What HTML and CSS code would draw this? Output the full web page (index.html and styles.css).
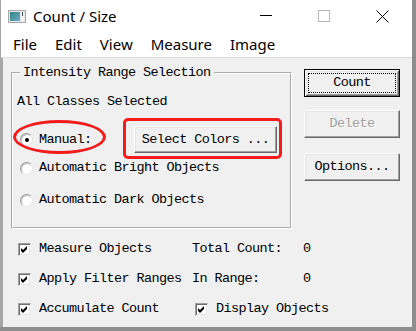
FILE: index.html
```html
<!DOCTYPE html>
<html>
<head>
<meta charset="utf-8">
<title>Count / Size</title>
<link rel="stylesheet" href="styles.css">
</head>
<body>
<div class="window">
  <div class="titlebar">
    <svg class="app-icon" width="18" height="13" viewBox="0 0 18 13">
      <defs>
        <linearGradient id="ig" x1="0" y1="0" x2="1" y2="1">
          <stop offset="0" stop-color="#2f7f86"/>
          <stop offset="0.5" stop-color="#4f9aa0"/>
          <stop offset="1" stop-color="#6fa6d8"/>
        </linearGradient>
      </defs>
      <rect x="0.5" y="0.5" width="17" height="12" fill="#e6e6e6" stroke="#a8a8a8"/>
      <rect x="2" y="2" width="10" height="9" fill="url(#ig)"/>
      <rect x="13" y="2" width="3" height="9" fill="#f4f4f4"/>
      <rect x="14" y="2" width="1" height="4" fill="#3a4a5a"/>
    </svg>
    <span class="title">Count / Size</span>
    <div class="caption">
      <span class="cap-btn"><svg width="12" height="12" viewBox="0 0 12 12"><path d="M0 5.5H12" stroke="#000" stroke-width="1"/></svg></span>
      <span class="cap-btn"><svg width="12" height="12" viewBox="0 0 12 12"><rect x="0.5" y="0.5" width="11" height="11" fill="none" stroke="#b8b8b8"/></svg></span>
      <span class="cap-btn"><svg width="13" height="13" viewBox="0 0 13 13"><path d="M0.5 0.5L12.5 12.5M12.5 0.5L0.5 12.5" stroke="#000" stroke-width="1"/></svg></span>
    </div>
  </div>
  <div class="menubar">
    <span class="menu-item">File</span>
    <span class="menu-item">Edit</span>
    <span class="menu-item">View</span>
    <span class="menu-item">Measure</span>
    <span class="menu-item">Image</span>
  </div>
  <div class="client">
    <div class="top">
      <fieldset class="group">
        <legend>Intensity Range Selection</legend>
        <div class="status">All Classes Selected</div>
        <div class="opt-row manual">
          <label class="radio-label"><span class="radio checked"></span>Manual:</label>
          <span class="highlight-box"><button class="btn select-colors">Select Colors ...</button></span>
          <span class="ellipse-mark"></span>
        </div>
        <div class="opt-row bright">
          <label class="radio-label"><span class="radio"></span>Automatic Bright Objects</label>
        </div>
        <div class="opt-row dark">
          <label class="radio-label"><span class="radio"></span>Automatic Dark Objects</label>
        </div>
      </fieldset>
      <div class="side-buttons">
        <button class="btn default count">Count</button>
        <button class="btn disabled delete">Delete</button>
        <button class="btn options">Options...</button>
      </div>
    </div>
    <div class="stats">
      <label class="check-label"><span class="checkbox"><svg width="13" height="13" viewBox="0 0 13 13"><polygon points="3,5 5,7 9,3 9,6 5,10 3,8" fill="#000"/></svg></span>Measure Objects</label>
      <span class="stat-name">Total Count:</span>
      <span class="stat-val">0</span>
      <label class="check-label"><span class="checkbox"><svg width="13" height="13" viewBox="0 0 13 13"><polygon points="3,5 5,7 9,3 9,6 5,10 3,8" fill="#000"/></svg></span>Apply Filter Ranges</label>
      <span class="stat-name">In Range:</span>
      <span class="stat-val">0</span>
      <label class="check-label"><span class="checkbox"><svg width="13" height="13" viewBox="0 0 13 13"><polygon points="3,5 5,7 9,3 9,6 5,10 3,8" fill="#000"/></svg></span>Accumulate Count</label>
      <label class="check-label display"><span class="checkbox"><svg width="13" height="13" viewBox="0 0 13 13"><polygon points="3,5 5,7 9,3 9,6 5,10 3,8" fill="#000"/></svg></span>Display Objects</label>
    </div>
  </div>
</div>
</body>
</html>
```
FILE: styles.css
```css
* { box-sizing: border-box; }
html, body { margin: 0; padding: 0; }
body {
  width: 416px;
  height: 331px;
  overflow: hidden;
  background: #8e8e8e;
  font-family: "Noto Sans", "Open Sans", sans-serif;
  color: #000;
}
.window {
  width: 412px;
  height: 327px;
  background: #f0f0f0;
  border-left: 1px solid #a6a6a6;
  display: flex;
  flex-direction: column;
}
.titlebar {
  height: 32px;
  background: #fff;
  display: flex;
  align-items: center;
  flex: none;
}
.app-icon { margin-left: 7px; flex: none; }
.title { margin-left: 7px; font-size: 15px; line-height: 20px; }
.caption { margin-left: auto; margin-right: 1px; display: flex; height: 100%; }
.cap-btn { width: 58px; display: flex; align-items: center; justify-content: center; }
.cap-btn svg { display: block; }

.menubar {
  height: 26px;
  background: #fff;
  border-bottom: 1px solid #dadada;
  display: flex;
  padding-left: 3px;
  flex: none;
}
.menu-item { padding: 0 9px; font-size: 15px; line-height: 25px; }

.client {
  flex: 1;
  border-left: 2px solid #a6a6a6;
  padding: 7px 0 0 8px;
  font-family: "Liberation Mono", "Courier New", monospace;
  font-size: 13.5px;
  letter-spacing: -0.6px;
  line-height: 16px;
}
.top { display: flex; align-items: flex-start; }

.group {
  width: 281px;
  margin: 0;
  padding: 0 13px 19px 4px;
  border: 2px groove #fff;
  min-width: 0;
}
.group legend {
  margin-left: 3px;
  padding: 0 3px;
  line-height: 16px;
  height: 16px;
}
.status { margin-top: 13px; height: 16px; }
.opt-row { display: flex; align-items: center; position: relative; }
.manual { margin-top: 16px; height: 27px; }
.bright { margin-top: 7px; height: 16px; }
.dark { margin-top: 16px; height: 16px; }

.radio-label { display: flex; align-items: center; }
.radio {
  width: 13px;
  height: 13px;
  margin-left: 3px;
  margin-right: 6px;
  border-radius: 50%;
  background: #fff;
  border: 1px solid;
  border-color: #9c9c9c #e6e6e6 #e6e6e6 #9c9c9c;
  box-shadow: inset 1px 1px 0 #c4c4c4;
  display: flex;
  align-items: center;
  justify-content: center;
  flex: none;
}
.radio.checked::after {
  content: "";
  width: 4px;
  height: 4px;
  border-radius: 50%;
  background: #000;
}

.btn {
  font: inherit;
  letter-spacing: inherit;
  color: #000;
  background: #f0f0f0;
  border: 1px solid;
  border-color: #fff #696969 #696969 #fff;
  box-shadow: inset -1px -1px 0 #a0a0a0, inset 1px 1px 0 #e3e3e3;
  padding: 0;
  margin: 0;
  height: 28px;
  display: flex;
  align-items: center;
  justify-content: center;
}
.highlight-box { margin-left: auto; position: relative; display: block; }
.highlight-box::after {
  content: "";
  position: absolute;
  top: -8px;
  left: -11px;
  right: -5px;
  bottom: -6px;
  border: 3px solid #f21c1c;
  border-radius: 5px;
}
.select-colors { width: 143px; height: 27px; }
.ellipse-mark {
  position: absolute;
  left: -4px;
  top: -6px;
  width: 93px;
  height: 34px;
  border: 3px solid #f21c1c;
  border-radius: 50%;
}

.side-buttons { margin-left: 12px; display: flex; flex-direction: column; }
.side-buttons .btn { width: 96px; }
.count {
  margin-top: 4px;
  border: 1px solid #000;
  box-shadow: inset 1px 1px 0 #fff, inset -1px -1px 0 #696969, inset 2px 2px 0 #e3e3e3, inset -2px -2px 0 #a0a0a0;
  outline: 1px dotted #000;
  outline-offset: -5px;
}
.delete { margin-top: 13px; color: #a0a0a0; text-shadow: 1px 1px 0 #fff; }
.options { margin-top: 15px; }

.stats {
  margin-top: 5px;
  margin-left: 7px;
  display: grid;
  grid-template-columns: 174px 111px auto;
  grid-auto-rows: 30px;
  align-items: center;
}
.check-label { display: flex; align-items: center; white-space: nowrap; }
.checkbox {
  width: 13px;
  height: 13px;
  margin-right: 8px;
  background: #fff;
  border: 1px solid;
  border-color: #a0a0a0 #f4f4f4 #f4f4f4 #a0a0a0;
  box-shadow: inset 1px 1px 0 #6d6d6d, inset -1px -1px 0 #e3e3e3;
  position: relative;
  flex: none;
}
.checkbox svg { position: absolute; left: -1px; top: -1px; }
.display { grid-column: 2 / span 2; margin-left: 3px; }
```
